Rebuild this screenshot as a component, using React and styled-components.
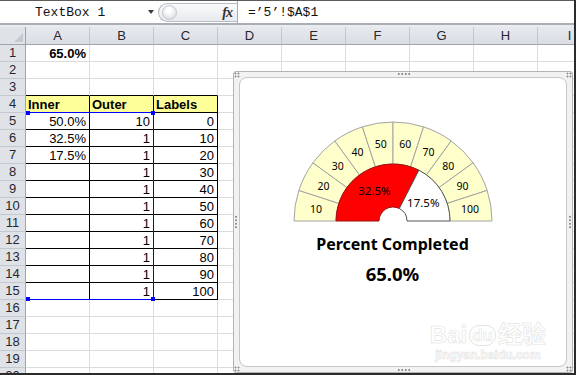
import React from "react";
import styled, { createGlobalStyle } from "styled-components";

const GlobalStyle = createGlobalStyle`
  html, body { margin: 0; padding: 0; background: #fff; }
  body {
    width: 576px;
    height: 375px;
    overflow: hidden;
    font-family: "Liberation Sans", Arial, sans-serif;
  }
`;

const Window = styled.div`
  position: relative;
  width: 576px;
  height: 375px;
  overflow: hidden;
  box-sizing: border-box;
  border-right: 2px solid #2b2b2b;
  border-bottom: 2px solid #2b2b2b;
  background: #fff;
`;

const FormulaBar = styled.div`
  display: flex;
  height: 23px;
  box-sizing: border-box;
  border-top: 1px solid #5c5c5c;
  background: #fff;
`;

const NameBox = styled.div`
  width: 158px;
  display: flex;
  align-items: center;
  box-sizing: border-box;
  padding-left: 35px;
  font-family: "Liberation Mono", "Courier New", monospace;
  font-size: 13px;
  color: #111;
`;

const DropArrow = styled.span`
  margin-left: auto;
  margin-right: 4px;
  width: 0;
  height: 0;
  border-left: 3.5px solid transparent;
  border-right: 3.5px solid transparent;
  border-top: 4px solid #3a3a3a;
`;

const Pill = styled.div`
  width: 79px;
  margin: 2px 0 1px;
  display: flex;
  align-items: center;
  box-sizing: border-box;
  border: 1px solid #b7bcc4;
  border-right: none;
  border-radius: 10px 0 0 10px;
  background: linear-gradient(#fafbfc, #e6e9ed);
  padding: 0 5px 0 3px;
`;

const Knob = styled.span`
  width: 13px;
  height: 13px;
  border-radius: 50%;
  border: 1px solid #c3c7cd;
  background: radial-gradient(circle at 45% 35%, #ffffff 20%, #d4d7dc 90%);
`;

const Fx = styled.span`
  margin-left: auto;
  font-family: "Liberation Serif", "Times New Roman", serif;
  font-style: italic;
  font-weight: bold;
  font-size: 14px;
  color: #333;
  letter-spacing: -1px;
`;

const FormulaInput = styled.div`
  flex: 1;
  display: flex;
  align-items: center;
  border-left: 1px solid #a9adb3;
  padding-left: 10px;
  font-family: "Liberation Mono", "Courier New", monospace;
  font-size: 13px;
  color: #111;
`;

const Divider = styled.div`
  height: 4px;
  background: linear-gradient(#a9aeb5 0 2px, #e9ebee 2px);
`;

const Grid = styled.div`
  position: relative;
  display: grid;
  grid-template-columns: 26px repeat(9, 64px);
  grid-template-rows: 18px;
  grid-auto-rows: 17px;
`;

const Corner = styled.div`
  position: relative;
  background: #dfe3e8;
  border-right: 1px solid #9ea4ab;
  border-bottom: 1px solid #9ea4ab;
  box-sizing: border-box;
  &::after {
    content: "";
    position: absolute;
    right: 2px;
    bottom: 2px;
    width: 0;
    height: 0;
    border-left: 9px solid transparent;
    border-bottom: 9px solid #c5c9cf;
  }
`;

const ColHead = styled.div`
  background: linear-gradient(#e6e9ed, #dadee4);
  border-right: 1px solid #c3c8ce;
  border-bottom: 1px solid #9ea4ab;
  box-sizing: border-box;
  text-align: center;
  font-size: 13px;
  line-height: 17px;
  color: #27272f;
`;

const RowHead = styled.div`
  background: #dfe3e8;
  border-right: 1px solid #9ea4ab;
  border-bottom: 1px solid #c3c8ce;
  box-sizing: border-box;
  text-align: center;
  font-size: 13px;
  line-height: 16px;
  color: #27272f;
`;

const Cell = styled.div`
  box-sizing: border-box;
  border-right: 1px solid ${(p) => (p.$boxR ? "#000" : "#dadcdd")};
  border-bottom: 1px solid ${(p) => (p.$boxB ? "#000" : "#dadcdd")};
  background: ${(p) => p.$bg || "#fff"};
  text-align: ${(p) => p.$align};
  padding: 1px 3px 0 2px;
  font-size: 13px;
  line-height: 15px;
  font-weight: ${(p) => (p.$bold ? "bold" : "normal")};
  color: #000;
  white-space: nowrap;
  overflow: hidden;
`;

const Selection = styled.div`
  position: absolute;
  left: 26px;
  top: 85px;
  width: 128px;
  height: 188px;
  box-sizing: border-box;
  border: 1px solid #0000ff;
  border-left: none;
  pointer-events: none;
`;

const SelHandle = styled.span`
  position: absolute;
  width: 4px;
  height: 4px;
  background: #0000ff;
  ${(p) => (p.$right ? "right: -2px;" : "left: 0;")}
  ${(p) => (p.$bottom ? "bottom: -2px;" : "top: -2px;")}
`;

const ChartFrame = styled.div`
  position: absolute;
  left: 233px;
  top: 71px;
  width: 340px;
  height: 302px;
  box-sizing: border-box;
  border: 1px solid #b3b3b3;
  border-radius: 3px;
  background: #f2f2f2;
  padding: 5px;
`;

const Grip = styled.span`
  position: absolute;
  ${(p) => p.$place}
  width: ${(p) => (p.$vertical ? "2px" : "14px")};
  height: ${(p) => (p.$vertical ? "14px" : "2px")};
  background: radial-gradient(circle, #8f8f8f 0.9px, transparent 1.1px) 0 0 /
    ${(p) => (p.$vertical ? "2px 3.5px" : "3.5px 2px")};
`;

const CornerGrip = styled.span`
  position: absolute;
  ${(p) => p.$place}
  width: 6px;
  height: 6px;
  background: radial-gradient(circle, #8f8f8f 0.9px, transparent 1.1px) 0 0 / 3px 3px;
`;

const ChartArea = styled.div`
  position: relative;
  height: 100%;
  box-sizing: border-box;
  background: #fff;
  border: 1px solid #c6c6c6;
  border-radius: 8px;
  display: flex;
  flex-direction: column;
  align-items: center;
  padding: 38px 21px 0 0;
  font-family: "Noto Sans", "Open Sans", sans-serif;
`;

const Gauge = styled.svg`
  display: block;
  overflow: visible;
`;

const Title = styled.div`
  margin-top: 8px;
  font-size: 16px;
  line-height: 20px;
  font-weight: bold;
  color: #000;
`;

const Value = styled.div`
  margin-top: 8px;
  font-size: 18.5px;
  line-height: 24px;
  font-weight: bold;
  color: #000;
`;

const Watermark = styled.div`
  position: absolute;
  right: 20px;
  bottom: 4px;
  display: flex;
  flex-direction: column;
  align-items: center;
  color: #fff;
  -webkit-text-stroke: 0.6px #e2e2e2;
  font-family: "Liberation Sans", "Noto Sans CJK SC", sans-serif;
  pointer-events: none;
`;

const MarkLine = styled.div`
  display: flex;
  align-items: center;
  gap: 2px;
  font-size: ${(p) => p.$size}px;
  line-height: ${(p) => p.$size + 2}px;
  font-weight: bold;
`;

const MarkBadge = styled.span`
  border: 1.5px solid #e2e2e2;
  border-radius: 10px;
  padding: 0 2px;
  font-size: 17px;
  line-height: 19px;
`;

const COLS = ["A", "B", "C", "D", "E", "F", "G", "H", "I"];
const ROWS = Array.from({ length: 20 }, (_, i) => i + 1);

const tableRows = {
  4: ["Inner", "Outer", "Labels"],
  5: ["50.0%", "10", "0"],
  6: ["32.5%", "1", "10"],
  7: ["17.5%", "1", "20"],
  8: ["", "1", "30"],
  9: ["", "1", "40"],
  10: ["", "1", "50"],
  11: ["", "1", "60"],
  12: ["", "1", "70"],
  13: ["", "1", "80"],
  14: ["", "1", "90"],
  15: ["", "1", "100"],
};

function cellProps(row, c) {
  const inTable = row >= 4 && row <= 15 && c <= 2;
  const props = {
    $align: "right",
    $boxR: inTable,
    $boxB: inTable || (row === 3 && c <= 2),
    text: "",
  };
  if (row === 1 && c === 0) {
    props.text = "65.0%";
    props.$bold = true;
  }
  if (inTable) {
    props.text = tableRows[row][c];
    if (row === 4) {
      props.$bold = true;
      props.$align = "left";
      props.$bg = "#ffff99";
    }
  }
  return props;
}

const CX = 110;
const CY = 105;
const R_OUT = 99;
const R_MID = 57;
const R_IN = 14;

const pt = (r, a) => {
  const rad = (a * Math.PI) / 180;
  return [CX + r * Math.cos(rad), CY - r * Math.sin(rad)];
};

const sector = (ri, ro, a1, a2) => {
  const large = a1 - a2 > 180 ? 1 : 0;
  const [x1, y1] = pt(ro, a1);
  const [x2, y2] = pt(ro, a2);
  const [x3, y3] = pt(ri, a2);
  const [x4, y4] = pt(ri, a1);
  return `M${x1} ${y1} A${ro} ${ro} 0 ${large} 1 ${x2} ${y2} L${x3} ${y3} A${ri} ${ri} 0 ${large} 0 ${x4} ${y4} Z`;
};

const outerSegments = Array.from({ length: 10 }, (_, k) => ({
  label: String((k + 1) * 10),
  a1: 180 - 18 * k,
  a2: 180 - 18 * (k + 1),
}));

const innerSlices = [
  { label: "32.5%", a1: 180, a2: 63, fill: "#ff0000", stroke: "#9a1010" },
  { label: "17.5%", a1: 63, a2: 0, fill: "#ffffff", stroke: "#555555" },
];

function GaugeChart() {
  return (
    <Gauge width="220" height="110" viewBox="0 0 220 110">
      {outerSegments.map((s) => {
        const [lx, ly] = pt(78, (s.a1 + s.a2) / 2);
        return (
          <g key={s.label}>
            <path d={sector(R_MID, R_OUT, s.a1, s.a2)} fill="#ffffcc" stroke="#a3a3a3" strokeWidth="1" />
            <text x={lx} y={ly} textAnchor="middle" dominantBaseline="central" fontSize="10.5" fill="#000">
              {s.label}
            </text>
          </g>
        );
      })}
      {innerSlices.map((s) => (
        <path key={s.label} d={sector(R_IN, R_MID, s.a1, s.a2)} fill={s.fill} stroke={s.stroke} strokeWidth="1" />
      ))}
      {innerSlices.map((s) => {
        const [lx, ly] = pt((R_IN + R_MID) / 2, (s.a1 + s.a2) / 2);
        return (
          <text key={s.label} x={lx} y={ly} textAnchor="middle" dominantBaseline="central" fontSize="11.5" fill="#000">
            {s.label}
          </text>
        );
      })}
    </Gauge>
  );
}

export default function App() {
  return (
    <Window>
      <GlobalStyle />
      <FormulaBar>
        <NameBox>
          TextBox 1
          <DropArrow />
        </NameBox>
        <Pill>
          <Knob />
          <Fx>fx</Fx>
        </Pill>
        <FormulaInput>=’5’!$A$1</FormulaInput>
      </FormulaBar>
      <Divider />
      <Grid>
        <Corner />
        {COLS.map((c) => (
          <ColHead key={c}>{c}</ColHead>
        ))}
        {ROWS.map((row) => (
          <React.Fragment key={row}>
            <RowHead>{row}</RowHead>
            {COLS.map((col, c) => {
              const { text, ...rest } = cellProps(row, c);
              return (
                <Cell key={col} {...rest}>
                  {text}
                </Cell>
              );
            })}
          </React.Fragment>
        ))}
        <Selection>
          <SelHandle />
          <SelHandle $right />
          <SelHandle $bottom />
          <SelHandle $right $bottom />
        </Selection>
      </Grid>
      <ChartFrame>
        <CornerGrip $place="left: 0; top: 0;" />
        <CornerGrip $place="right: 0; top: 0;" />
        <CornerGrip $place="left: 0; bottom: 0;" />
        <CornerGrip $place="right: 0; bottom: 0;" />
        <Grip $place="left: 163px; top: 1px;" />
        <Grip $place="left: 163px; bottom: 1px;" />
        <Grip $vertical $place="left: 1px; top: 143px;" />
        <Grip $vertical $place="right: 1px; top: 143px;" />
        <ChartArea>
          <GaugeChart />
          <Title>Percent Completed</Title>
          <Value>65.0%</Value>
          <Watermark>
            <MarkLine $size={24}>
              Bai<MarkBadge>du</MarkBadge>经验
            </MarkLine>
            <MarkLine $size={12}>jingyan.baidu.com</MarkLine>
          </Watermark>
        </ChartArea>
      </ChartFrame>
    </Window>
  );
}
